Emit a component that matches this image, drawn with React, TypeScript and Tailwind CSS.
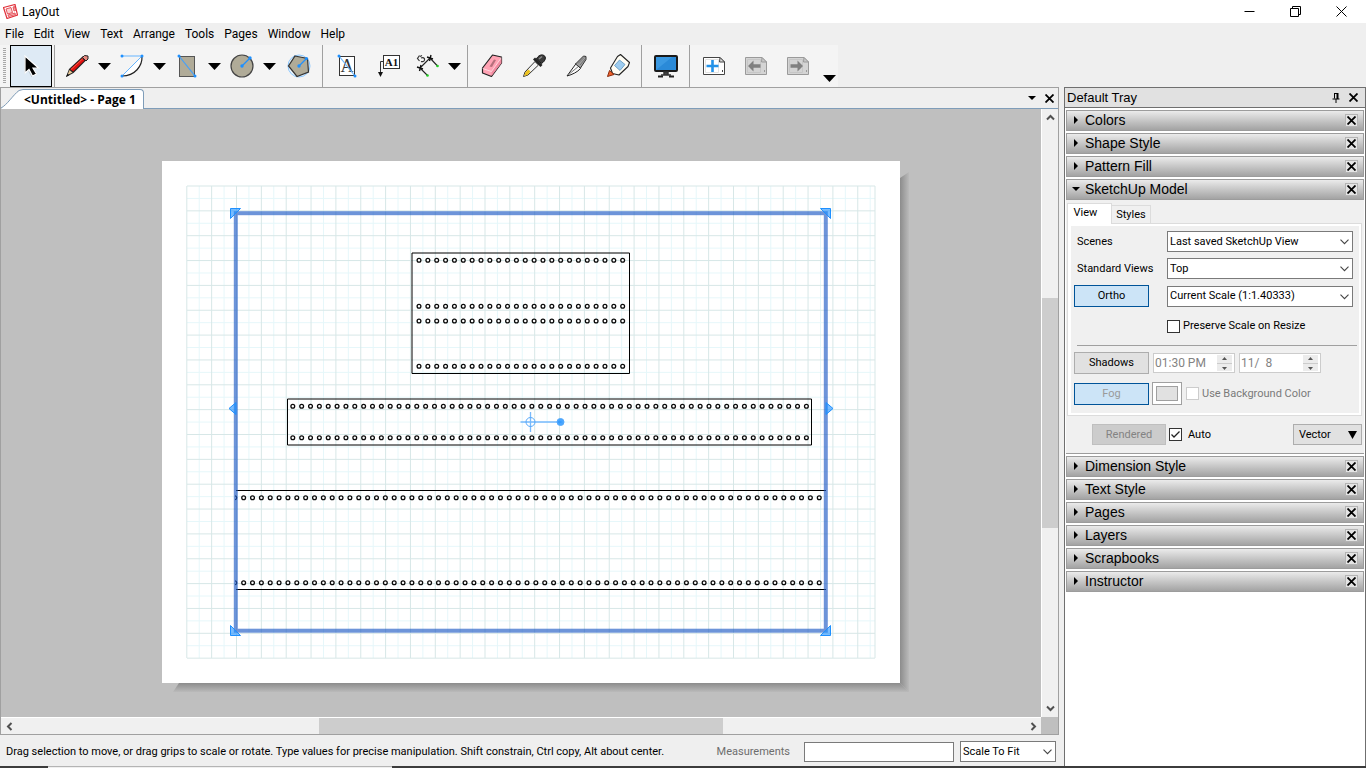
import { useState } from 'react';
import type { ReactNode } from 'react';

const MENUS = ['File', 'Edit', 'View', 'Text', 'Arrange', 'Tools', 'Pages', 'Window', 'Help'];
const PANELS_TOP = ['Colors', 'Shape Style', 'Pattern Fill'];
const PANELS_BOTTOM = ['Dimension Style', 'Text Style', 'Pages', 'Layers', 'Scrapbooks', 'Instructor'];

const BLUE = '#1e90ff';
const STONE = '#b0ab98';

/* ---------- small glyphs ---------- */

function Icon({ children }: { children: ReactNode }) {
  return (
    <svg width="26" height="26" viewBox="0 0 26 26" className="shrink-0 overflow-visible" aria-hidden="true">
      {children}
    </svg>
  );
}

function CloseGlyph() {
  return (
    <svg width="9" height="9" viewBox="0 0 9 9" aria-hidden="true">
      <path d="M.5.5l8 8M8.5.5l-8 8" stroke="#000" strokeWidth="1.8" />
    </svg>
  );
}

function Chevron({ className }: { className?: string }) {
  return (
    <svg width="9" height="6" viewBox="0 0 9 6" className={className} aria-hidden="true">
      <path d="M.5.7l4 4 4-4" fill="none" stroke="#444" strokeWidth="1.1" />
    </svg>
  );
}

/* ---------- toolbar ---------- */

function SelectIcon() {
  return (
    <Icon>
      <path d="M6 3v18l4-3.5 3.5 6.5 5.5-3-3.5-5.5h6z" fill="#9aa3aa" opacity=".5" />
      <path d="M7 3v17l4-3.5 3.5 6.5 4-2-3.5-6h5.5z" fill="#000" stroke="#fff" strokeWidth="1.2" />
    </Icon>
  );
}

function PencilIcon() {
  return (
    <Icon>
      <path d="M2 24l3-8L19 3l4 3.500L9.500 20z" fill="#222" />
      <path d="M6.200 16.200L18 5.300l2.500 2.200L9.200 18.500z" fill="#e01010" />
      <path d="M7 16.500L19 5.500" stroke="#ff6a50" strokeWidth=".8" />
      <path d="M3.500 22l2-5 3 2.500z" fill="#e8c896" />
      <path d="M2 24l1.500-3.500 1.800 1.800z" fill="#111" />
      <path d="M18.500 4.500l2-2 3.500.5v3l-2 2z" fill="#e88a80" stroke="#222" strokeWidth="1" />
    </Icon>
  );
}

function ArcIcon() {
  return (
    <Icon>
      <path d="M23 3C23.500 13 16 23 3 23" fill="#fff" stroke="#222" strokeWidth="1.2" />
      <path d="M3 3h20L3 23" fill="none" stroke="#66b5ff" />
      <circle cx="3" cy="3" r="1.5" fill={BLUE} />
      <circle cx="23" cy="3" r="1.5" fill={BLUE} />
      <circle cx="3" cy="23" r="1.5" fill={BLUE} />
    </Icon>
  );
}

function RectangleIcon() {
  return (
    <Icon>
      <rect x="5.5" y="3.5" width="15" height="20" fill={STONE} stroke="#555" />
      <path d="M5 3l16 20" stroke="#3fa0ff" strokeWidth="1.2" />
      <circle cx="5" cy="3" r="1.5" fill={BLUE} />
      <circle cx="21" cy="23" r="1.5" fill={BLUE} />
    </Icon>
  );
}

function CircleIcon() {
  return (
    <Icon>
      <circle cx="13" cy="13" r="11" fill={STONE} stroke="#444" strokeWidth="1.2" />
      <path d="M13 13l8-8" stroke={BLUE} strokeWidth="1.2" />
      <circle cx="13" cy="13" r="1.7" fill={BLUE} />
      <circle cx="21" cy="5" r="1.7" fill={BLUE} />
    </Icon>
  );
}

function PolygonIcon() {
  return (
    <Icon>
      <circle cx="15" cy="13" r="11" fill="#eaf4fc" stroke="#8cc8ff" />
      <path d="M11 3l12.500 2.500 1 13.500-11.500 4.500L4.500 13z" fill={STONE} stroke="#333" strokeWidth="1.2" />
      <path d="M15 13l7.500-7.500" stroke={BLUE} strokeWidth="1.2" />
      <circle cx="15" cy="13" r="1.7" fill={BLUE} />
      <circle cx="22.5" cy="5.5" r="1.5" fill={BLUE} />
    </Icon>
  );
}

function TextIcon() {
  return (
    <Icon>
      <rect x="5.5" y="3.5" width="15" height="19" fill="#fff" stroke="#333" />
      <text x="13" y="19" textAnchor="middle" fontSize="18" fill="#333" fontFamily="Liberation Serif, serif">A</text>
      <path d="M5 3l16 20" stroke="#66b5ff" strokeWidth="1.2" />
      <circle cx="5" cy="3" r="1.5" fill={BLUE} />
      <circle cx="21" cy="23" r="1.5" fill={BLUE} />
    </Icon>
  );
}

function LabelIcon() {
  return (
    <Icon>
      <rect x="7.5" y="2.5" width="16" height="13" fill="#fff" stroke="#333" />
      <text x="15.5" y="13" textAnchor="middle" fontSize="11" fontWeight="700" fill="#111" fontFamily="Liberation Serif, serif">A1</text>
      <path d="M7 8.500H4.500V19" fill="none" stroke="#333" />
      <path d="M2 19h5l-2.500 5z" fill="#111" />
    </Icon>
  );
}

function DimensionIcon() {
  return (
    <Icon>
      <path d="M4 15L14 5M4 15l7.500 7.500M14 5l7.500 8" stroke="#222" strokeWidth="1.1" />
      <path d="M1 14l6 2M5 12l-1.500 6M11 4l6 2M15 2l-1.500 6" stroke="#111" strokeWidth="1.4" />
      <path d="M3.500 2.500L1.500 5.500l2 2.500M4 3.500l2-1M5 5c2-1 4 0 3.500 2-.3 1.500-2 2-3.500 1.500" fill="none" stroke="#333" strokeWidth="1.2" />
      <circle cx="11.5" cy="22.5" r="1.3" fill="#2c2" />
      <circle cx="21.5" cy="13" r="1.3" fill="#2c2" />
    </Icon>
  );
}

function EraserIcon() {
  return (
    <Icon>
      <path d="M13.500 2l9 2v6L12.500 23.500l-9-3.500v-5z" fill="#ffa3b4" stroke="#222" strokeWidth="1.2" strokeLinejoin="round" />
      <path d="M12.500 18.500v4.500l10-13V5z" fill="#f08ba0" />
      <path d="M3.500 15.500l9 3 10-14" fill="none" stroke="#fff" strokeWidth=".8" opacity=".7" />
      <path d="M10.500 13.500l4.500-7 2 .5-4 7z" fill="#b5707c" />
    </Icon>
  );
}

function DropperIcon() {
  return (
    <Icon>
      <path d="M2.500 23.500L4 19 14 8.500l3.500 3.500L7 22z" fill="#f2f2f2" stroke="#333" />
      <path d="M3 23l1.500-4 3-2.500 2 2L6.500 22z" fill="#ecc11c" />
      <path d="M12 6.500l2-2 7.500 7.500-2 2z" fill="#222" />
      <path d="M15.500 6C17 2.500 20.500 1 23 2.500s1.500 5.500-2.500 8z" fill="#3b3b3b" stroke="#111" />
      <path d="M18 6l3-2.500" stroke="#8a8a8a" strokeWidth="1.5" />
    </Icon>
  );
}

function KnifeIcon() {
  return (
    <Icon>
      <path d="M4 23L13.500 10l4 5.500c-3 3.500-8 6-13.500 7.500z" fill="#fafafa" stroke="#222" strokeWidth="1" />
      <path d="M5 22l11-9" stroke="#777" />
      <path d="M12.500 11L20.500 3l2.500.5v3L17.500 15z" fill="#a0a0a0" stroke="#333" strokeWidth="1" />
      <path d="M15 10.500l6-6M17 12l5-6" stroke="#666" strokeWidth=".8" />
    </Icon>
  );
}

function GlueIcon() {
  return (
    <Icon>
      <path d="M15.500 1.500l9 8-1.500 4-9 8.500-6.500-1.500-2-5.500 7-11.500z" fill="#fffdf4" stroke="#222" strokeWidth="1.1" strokeLinejoin="round" />
      <path d="M14.500 7l5.500 4.500-5 6-5.500-5z" fill="#9dccf0" stroke="#5a93bd" strokeWidth=".8" />
      <path d="M2.500 23.500l2-6 4.500 4z" fill="#f0622a" stroke="#8a2c10" />
    </Icon>
  );
}

function MonitorIcon() {
  return (
    <Icon>
      <rect x="2" y="3" width="22" height="15" rx="1" fill="#2a8ad8" stroke="#1a1a1a" strokeWidth="2" />
      <path d="M3 17V4h16z" fill="#48a3ea" opacity=".6" />
      <path d="M11 19h4v3h-4zM8 22h10" fill="#444" stroke="#333" strokeWidth="1.5" />
      <path d="M5 23.500h5M16 23.500h5" stroke="#222" strokeWidth="1.8" />
    </Icon>
  );
}

function PageIcon({ kind }: { kind: 'add' | 'previous' | 'next' }) {
  const enabled = kind === 'add';
  const line = enabled ? '#444' : '#9a9a9a';
  return (
    <Icon>
      <path d="M2.500 4.500h16.500l4.500 4.500v12.500h-21z" fill={enabled ? '#fff' : '#d4d4d4'} stroke={line} />
      <path d="M4.500 6.500h13v13h-13z" fill="none" stroke={enabled ? '#e2e2e2' : '#c6c6c6'} />
      <path d="M19 4.500l-.5 4.500h5z" fill={enabled ? '#ddd' : '#c8c8c8'} stroke={line} />
      <path d="M21.500 17v2" stroke={line} />
      {kind === 'add' && <path d="M11.500 7v12M5.500 13h12" stroke="#2492e8" strokeWidth="2.6" />}
      {kind === 'previous' && <path d="M5 13l5.500-5.500v3.700h7v3.600h-7v3.700z" fill="#808080" />}
      {kind === 'next' && <path d="M18 13l-5.500-5.500v3.700h-7v3.600h7v3.700z" fill="#808080" />}
    </Icon>
  );
}

interface ToolProps {
  label: string;
  children: ReactNode;
  active?: boolean;
  narrow?: boolean;
}

function Tool({ label, children, active, narrow }: ToolProps) {
  return (
    <button
      type="button"
      aria-label={label}
      aria-pressed={active}
      className={`flex h-[42px] items-center justify-center ${narrow ? 'w-[38px]' : 'w-[42px]'} ${
        active ? 'border border-black bg-[#deeaf5]' : ''
      }`}
    >
      {children}
    </button>
  );
}

function DropArrow({ label }: { label: string }) {
  return (
    <button type="button" aria-label={label} className="flex h-[42px] w-[13px] items-center justify-center">
      <svg width="13" height="7" viewBox="0 0 13 7" aria-hidden="true">
        <path d="M0 0h13L6.500 7z" />
      </svg>
    </button>
  );
}

function Separator() {
  return <span className="mr-[3px] ml-0.5 h-[42px] w-px bg-[#a0a0a0]" />;
}

function Toolbar() {
  return (
    <div className="flex h-[42px] shrink-0 bg-[#efefef]">
      <div className="flex bg-[#f4f4f4] pr-0.5 pl-[3px]">
        <span className="mt-[3px] mr-1 h-9 w-[3px] bg-[repeating-linear-gradient(#a8a8a8_0_1px,transparent_1px_2px)]" />
        <Tool label="Select" active><SelectIcon /></Tool>
        <span className="mr-px ml-0.5 w-px bg-[#a0a0a0]" />
        <Tool label="Lines"><PencilIcon /></Tool>
        <DropArrow label="More lines" />
        <Tool label="Arcs"><ArcIcon /></Tool>
        <DropArrow label="More arcs" />
        <Tool label="Rectangles"><RectangleIcon /></Tool>
        <DropArrow label="More rectangles" />
        <Tool label="Circles"><CircleIcon /></Tool>
        <DropArrow label="More circles" />
        <Tool label="Polygon"><PolygonIcon /></Tool>
        <span className="w-0.5" />
        <Separator />
        <Tool label="Text"><TextIcon /></Tool>
        <Tool label="Label"><LabelIcon /></Tool>
        <Tool label="Dimensions" narrow><DimensionIcon /></Tool>
        <DropArrow label="More dimensions" />
        <span className="w-1" />
        <Separator />
        <Tool label="Erase"><EraserIcon /></Tool>
        <Tool label="Style"><DropperIcon /></Tool>
        <Tool label="Split"><KnifeIcon /></Tool>
        <Tool label="Join"><GlueIcon /></Tool>
        <Separator />
        <Tool label="Start Presentation"><MonitorIcon /></Tool>
        <Separator />
        <Tool label="Add Page"><PageIcon kind="add" /></Tool>
        <Tool label="Previous Page"><PageIcon kind="previous" /></Tool>
        <Tool label="Next Page"><PageIcon kind="next" /></Tool>
        <div className="flex flex-col justify-end pl-1">
          <button type="button" aria-label="Toolbar options" className="pb-[5px]">
            <svg width="13" height="7" viewBox="0 0 13 7" aria-hidden="true">
              <path d="M0 0h13L6.500 7z" />
            </svg>
          </button>
        </div>
      </div>
    </div>
  );
}

/* ---------- drawing ---------- */

const HOLE_STEP = 8.855;

function Holes({ x, y, count }: { x: number; y: number; count: number }) {
  return (
    <g fill="#fff" stroke="#0a0a0a" strokeWidth="1.3">
      {Array.from({ length: count }, (_, i) => (
        <circle key={i} cx={x + i * HOLE_STEP} cy={y} r="1.9" />
      ))}
    </g>
  );
}

function Grid() {
  const step = 12.425;
  const cols = Array.from({ length: 56 }, (_, i) => i);
  const rows = Array.from({ length: 39 }, (_, i) => i);
  return (
    <g fill="none">
      <g stroke="#e6f7fa">
        {cols.filter((i) => i % 2).map((i) => <path key={i} d={`M${24.8 + i * step} 25v472`} />)}
        {rows.filter((i) => i % 2).map((i) => <path key={i} d={`M25 ${25 + i * step}h688`} />)}
      </g>
      <g stroke="#d7e7e7">
        {cols.filter((i) => i % 2 === 0).map((i) => <path key={i} d={`M${24.8 + i * step} 25v472`} />)}
        {rows.filter((i) => i % 2 === 0).map((i) => <path key={i} d={`M25 ${25 + i * step}h688`} />)}
        <path d="M713 25v472" />
      </g>
    </g>
  );
}

function Sheet() {
  return (
    <svg width="748" height="532" viewBox="0 0 748 532" className="shrink-0" role="img" aria-label="Page 1">
      <defs>
        <linearGradient id="shadeRight" x1="0" x2="1" y1="0" y2="0">
          <stop offset="0" stopColor="#8c8c8c" />
          <stop offset="1" stopColor="#bababa" />
        </linearGradient>
        <linearGradient id="shadeBottom" x1="0" x2="0" y1="0" y2="1">
          <stop offset="0" stopColor="#8c8c8c" />
          <stop offset="1" stopColor="#bababa" />
        </linearGradient>
        <clipPath id="viewport">
          <rect x="73" y="52" width="592" height="418" />
        </clipPath>
      </defs>
      <path d="M738 17l9-6v520l-9-9z" fill="url(#shadeRight)" />
      <path d="M17 522h721l9 9H11z" fill="url(#shadeBottom)" />
      <rect width="738" height="522" fill="#fff" />
      <Grid />

      <g fill="none" stroke="#000">
        <path d="M250 92h217.500v120.500H250z" />
        <path d="M125.500 238h524v46h-524z" />
        <path d="M74 329.500h590M74 428.500h590" />
      </g>
      <Holes x={257} y={99.2} count={24} />
      <Holes x={257} y={145.3} count={24} />
      <Holes x={257} y={160} count={24} />
      <Holes x={257} y={205.3} count={24} />
      <Holes x={130.8} y={245.2} count={59} />
      <Holes x={130.8} y={276.8} count={59} />
      <g clipPath="url(#viewport)">
        <Holes x={72.8} y={336.7} count={67} />
        <Holes x={72.8} y={421.7} count={67} />
      </g>

      <rect x="73.8" y="52.2" width="590" height="417.5" fill="none" stroke="#1f5ac4" strokeOpacity=".65" strokeWidth="4" />

      <g fill={BLUE} fillOpacity=".6" stroke={BLUE}>
        <path d="M68.500 47.500h10l-10 10z" />
        <path d="M668.500 47.500h-10l10 10z" />
        <path d="M68.500 474.500h10l-10-10z" />
        <path d="M668.500 474.500h-10l10-10z" />
        <path d="M74 241.500v12l-7-6z" />
        <path d="M664 241.500v12l7-6z" />
      </g>

      <g stroke="#56a9fb" fill="none">
        <path d="M358.500 261h41M368.500 251v20" strokeOpacity=".8" strokeWidth="1.3" />
        <circle cx="368.5" cy="261" r="4.5" />
        <circle cx="398.5" cy="261" r="3.5" fill={BLUE} fillOpacity=".8" />
      </g>
    </svg>
  );
}

/* ---------- scroll bars ---------- */

function ScrollArrow({ label, d }: { label: string; d: string }) {
  return (
    <button type="button" aria-label={label} className="flex h-[17px] w-4 shrink-0 items-center justify-center">
      <svg width="9" height="9" viewBox="0 0 9 9" aria-hidden="true">
        <path d={d} fill="none" stroke="#505050" strokeWidth="2" />
      </svg>
    </button>
  );
}

function DocumentPane() {
  return (
    <section className="flex min-w-0 flex-1 flex-col border border-[#a0a0a0] bg-[#efefef]">
      <div className="flex h-[21px] shrink-0 items-end justify-between border-b border-[#7f9db9]">
        <button type="button" className="-mb-px flex h-5 items-stretch">
          <svg width="22" height="20" viewBox="0 0 22 20" aria-hidden="true">
            <path d="M0 19.500C6 17 12 6 19 1.500L22 .5V20H0z" fill="#fff" />
            <path d="M0 19C6 16 12 6 18 1.500L22 .5" fill="none" stroke="#7f9db9" />
          </svg>
          <span className="flex items-center rounded-tr-sm border-t border-r border-[#7f9db9] bg-white pr-[7px] pl-px font-['Open_Sans',sans-serif] text-xs font-bold">
            &lt;Untitled&gt; - Page 1
          </span>
        </button>
        <div className="flex h-5 items-center gap-[9px] pr-1">
          <button type="button" aria-label="Page list">
            <svg width="8" height="4" viewBox="0 0 8 4" aria-hidden="true"><path d="M0 0h8L4 4z" /></svg>
          </button>
          <button type="button" aria-label="Close document"><CloseGlyph /></button>
        </div>
      </div>

      <div className="flex min-h-0 flex-1">
        <div className="min-w-0 flex-1 overflow-hidden bg-[#bfbfbf] pt-[52px] pl-[161px]">
          <Sheet />
        </div>
        <div className="flex w-[17px] flex-col border-l border-white bg-[#f0f0f0]">
          <ScrollArrow label="Scroll up" d="M1 6.500L4.500 3 8 6.500" />
          <div className="flex flex-1 flex-col justify-center"><div className="h-[40%] bg-[#cdcdcd]" /></div>
          <ScrollArrow label="Scroll down" d="M1 2.500L4.500 6 8 2.500" />
        </div>
      </div>
      <div className="flex h-[17px] shrink-0">
        <div className="flex flex-1 border-t border-white bg-[#f0f0f0]">
          <ScrollArrow label="Scroll left" d="M6.500 1L3 4.500 6.500 8" />
          <div className="flex flex-1 justify-center"><div className="w-[40%] bg-[#cdcdcd]" /></div>
          <ScrollArrow label="Scroll right" d="M2.500 1L6 4.500 2.500 8" />
        </div>
        <div className="w-[17px] bg-[#bfbfbf]" />
      </div>
    </section>
  );
}

function StatusBar() {
  return (
    <footer className="flex h-[31px] shrink-0 items-center pt-0.5 pr-[3px] pl-1.5">
      <span className="flex-1 whitespace-nowrap">
        Drag selection to move, or drag grips to scale or rotate. Type values for precise manipulation. Shift constrain, Ctrl copy, Alt about center.
      </span>
      <label htmlFor="measurements" className="mr-3.5 text-[#6d6d6d]">Measurements</label>
      <input id="measurements" type="text" className="h-5 w-[150px] border border-[#7a7a7a] bg-white px-1" />
      <div className="relative ml-1.5">
        <select aria-label="Zoom" className="block h-[21px] w-24 appearance-none border border-[#7a7a7a] bg-white pl-0.5">
          <option>Scale To Fit</option>
        </select>
        <Chevron className="pointer-events-none absolute top-2 right-1" />
      </div>
    </footer>
  );
}

/* ---------- tray ---------- */

function PanelHeader({ title, open }: { title: string; open?: boolean }) {
  return (
    <div className="flex h-[21px] items-center justify-between border border-[#9c9c9c] bg-linear-to-b from-[#ebebeb] to-[#a3a3a3] pr-[5px] pl-[5px] font-['Liberation_Sans',Arial,sans-serif]">
      <button type="button" aria-expanded={!!open} className="flex items-center text-sm leading-[19px]">
        <span className="flex w-[13px] pb-0.5">
          <svg width="8" height="8" viewBox="0 0 8 8" aria-hidden="true">
            <path d={open ? 'M0 2h8L4 6z' : 'M2 0v8l4-4z'} />
          </svg>
        </span>
        {title}
      </button>
      <button
        type="button"
        aria-label={`Close ${title}`}
        className="flex h-[13px] w-[13px] items-center justify-center border border-[#b4b4b4] bg-[#e4e4e4]"
      >
        <CloseGlyph />
      </button>
    </div>
  );
}

function Dropdown({ id, options }: { id: string; options: string[] }) {
  return (
    <div className="relative">
      <select id={id} className="block h-[21px] w-full appearance-none border border-[#7a7a7a] bg-white pl-0.5">
        {options.map((o) => <option key={o}>{o}</option>)}
      </select>
      <Chevron className="pointer-events-none absolute top-2 right-1" />
    </div>
  );
}

function Spinner({ label, value }: { label: string; value: string }) {
  return (
    <div className="flex h-5 w-[82px] items-center border border-[#cccccc] bg-white pr-0.5">
      <input aria-label={label} defaultValue={value} disabled className="w-full min-w-0 flex-1 pl-px text-xs text-[#838383]" />
      <span className="flex h-4 w-[15px] shrink-0 flex-col items-center justify-around bg-[#ececec]">
        <svg width="5" height="3" viewBox="0 0 5 3" aria-hidden="true"><path d="M0 3h5L2.500 0z" fill="#555" /></svg>
        <span className="h-px w-full bg-[#ccc]" />
        <svg width="5" height="3" viewBox="0 0 5 3" aria-hidden="true"><path d="M0 0h5L2.500 3z" fill="#555" /></svg>
      </span>
    </div>
  );
}

function ToggleButton({ label, on, disabled }: { label: string; on?: boolean; disabled?: boolean }) {
  return (
    <button
      type="button"
      disabled={disabled}
      className={`h-[22px] w-[75px] border ${on ? 'border-[#005499] bg-[#cce4f7]' : 'border-[#adadad] bg-[#e1e1e1]'} ${
        disabled ? 'text-[#9a9a9a]' : ''
      }`}
    >
      {label}
    </button>
  );
}

function ModelPanel() {
  const [preserve, setPreserve] = useState(false);
  const [auto, setAuto] = useState(true);

  return (
    <div className="-mt-0.5 border-b border-[#9c9c9c] bg-[#f0f0f0] pt-[3px] pr-0.5 pb-2 pl-px">
      <div className="flex items-end">
        <button type="button" className="-mb-px h-[21px] w-[45px] border border-b-0 border-[#dcdcdc] bg-white pb-0.5 pr-2">View</button>
        <button type="button" className="h-[18px] w-[39px] border border-b-0 border-l-0 border-[#dcdcdc]">Styles</button>
      </div>
      <div className="border border-[#dcdcdc] bg-white p-0.5 pl-[3px]">
        <div className="bg-[#f0f0f0] pt-[5px] pr-1.5 pb-2 pl-[3px]">
          <div className="grid grid-cols-[75px_1fr] items-center gap-x-[18px] gap-y-1.5">
            <label htmlFor="scenes" className="pl-[3px]">Scenes</label>
            <Dropdown id="scenes" options={['Last saved SketchUp View']} />
            <label htmlFor="views" className="pl-[3px] whitespace-nowrap">Standard Views</label>
            <Dropdown id="views" options={['Top', 'Front', 'Right']} />
            <ToggleButton label="Ortho" on />
            <Dropdown id="scale" options={['Current Scale (1:1.40333)']} />
            <label className="col-start-2 mt-1 flex h-[18px] items-center gap-[3px]">
              <input
                type="checkbox"
                checked={preserve}
                onChange={(e) => setPreserve(e.target.checked)}
                className="h-[13px] w-[13px] appearance-none border border-[#333] bg-white"
              />
              Preserve Scale on Resize
            </label>
          </div>
          <hr className="mt-2.5 -mr-1 mb-1.5 ml-[3px] border-[#a0a0a0]" />
          <div className="flex items-center">
            <ToggleButton label="Shadows" />
            <div className="ml-1 flex gap-1">
              <Spinner label="Time" value="01:30 PM" />
              <Spinner label="Date" value="11/  8" />
            </div>
          </div>
          <div className="mt-2 flex items-center">
            <ToggleButton label="Fog" on disabled />
            <button type="button" disabled aria-label="Fog color" className="ml-[3px] h-[23px] w-[30px] border border-[#a0a0a0] bg-white p-[3px]">
              <span className="block h-full border border-[#a0a0a0] bg-[#e1e1e1]" />
            </button>
            <label className="ml-1 flex items-center gap-[3px] text-[#7a7a7a]">
              <input type="checkbox" disabled className="h-[13px] w-[13px] appearance-none border border-[#ccc] bg-white" />
              Use Background Color
            </label>
          </div>
        </div>
      </div>
      <div className="mt-2 flex items-center pl-[25px]">
        <button type="button" disabled className="h-[21px] w-[74px] border border-[#bfbfbf] bg-[#cccccc] text-[#838383]">Rendered</button>
        <label className="ml-[3px] flex items-center gap-1.5">
          <span className="relative flex">
            <input
              type="checkbox"
              checked={auto}
              onChange={(e) => setAuto(e.target.checked)}
              className="h-[13px] w-[13px] appearance-none border border-[#333] bg-white"
            />
            {auto && (
              <svg width="13" height="13" viewBox="0 0 13 13" className="pointer-events-none absolute inset-0" aria-hidden="true">
                <path d="M2.500 6.500l2.500 2.500L10.500 3.500" fill="none" stroke="#222" strokeWidth="1.3" />
              </svg>
            )}
          </span>
          Auto
        </label>
        <button type="button" className="ml-auto flex h-[21px] w-[69px] items-center justify-between border border-[#adadad] bg-[#e1e1e1] pr-1 pl-[5px]">
          Vector
          <svg width="9" height="8" viewBox="0 0 9 8" aria-hidden="true"><path d="M0 0h9L4.500 8z" /></svg>
        </button>
      </div>
    </div>
  );
}

function Tray() {
  return (
    <aside className="flex w-[302px] shrink-0 flex-col border border-b-0 border-[#6f6f6f] bg-white">
      <div className="flex h-5 shrink-0 items-center justify-between border-b border-[#6f6f6f] bg-[#e1e1e1] pr-[7px] pl-0.5 font-['Liberation_Sans',Arial,sans-serif] text-[13px]">
        <span>Default Tray</span>
        <div className="flex items-center gap-[9px]">
          <button type="button" aria-label="Auto hide">
            <svg width="8" height="10" viewBox="0 0 8 10" aria-hidden="true">
              <path d="M2 .5h4M2.500.5v5M.5 6h7M4 6v4" fill="none" stroke="#000" />
              <path d="M5.500 0v6" stroke="#000" strokeWidth="2" />
            </svg>
          </button>
          <button type="button" aria-label="Close tray"><CloseGlyph /></button>
        </div>
      </div>
      <div className="flex flex-col gap-0.5 px-px pt-0.5">
        {PANELS_TOP.map((p) => <PanelHeader key={p} title={p} />)}
        <PanelHeader title="SketchUp Model" open />
        <ModelPanel />
        {PANELS_BOTTOM.map((p) => <PanelHeader key={p} title={p} />)}
      </div>
    </aside>
  );
}

export default function App() {
  return (
    <div className="flex h-screen flex-col overflow-hidden bg-[#efefef] font-['Roboto',sans-serif] text-[11px] leading-4 text-black">
      <header className="flex h-[23px] shrink-0 items-center bg-white pl-[3px] text-xs">
        <svg width="15" height="15" viewBox="0 0 15 15" aria-hidden="true">
          <path d="M.5 3.500L12 .5l2.500 10.500L4 14.500z" fill="#fff" stroke="#e0303a" strokeWidth="1.2" />
          <path d="M3 5l5-1.500 1.500 5-5 1.500zM10 3l1.500-.5 1 4-1.500.5zM5 11l7-2 .5 1.500-7 2z" fill="#fbd0d1" stroke="#e0303a" strokeWidth=".8" />
        </svg>
        <h1 className="ml-1">LayOut</h1>
        <div className="ml-auto flex items-center gap-[35px] pr-[19px]">
          <button type="button" aria-label="Minimize">
            <svg width="11" height="11" viewBox="0 0 11 11" aria-hidden="true"><path d="M.5 5.500h10" stroke="#000" /></svg>
          </button>
          <button type="button" aria-label="Restore">
            <svg width="11" height="11" viewBox="0 0 11 11" aria-hidden="true">
              <path d="M.5 2.500h8v8h-8zM2.500 2.500v-2h8v8h-2" fill="none" stroke="#000" />
            </svg>
          </button>
          <button type="button" aria-label="Close">
            <svg width="11" height="11" viewBox="0 0 11 11" aria-hidden="true"><path d="M.5.5l10 10M10.500.5l-10 10" stroke="#000" /></svg>
          </button>
        </div>
      </header>
      <nav className="flex h-[22px] shrink-0 items-center gap-2.5 pl-[5px] text-xs">
        {MENUS.map((m) => <button key={m} type="button">{m}</button>)}
      </nav>
      <Toolbar />
      <main className="flex min-h-0 flex-1">
        <div className="mr-[5px] flex min-w-0 flex-1 flex-col">
          <DocumentPane />
          <StatusBar />
        </div>
        <Tray />
      </main>
      <div className="flex h-0.5 shrink-0 bg-[#3c3c3c] pl-12">
        <div className="w-[344px] border-t border-[#b4b4b4] bg-[#efefef]" />
      </div>
    </div>
  );
}
